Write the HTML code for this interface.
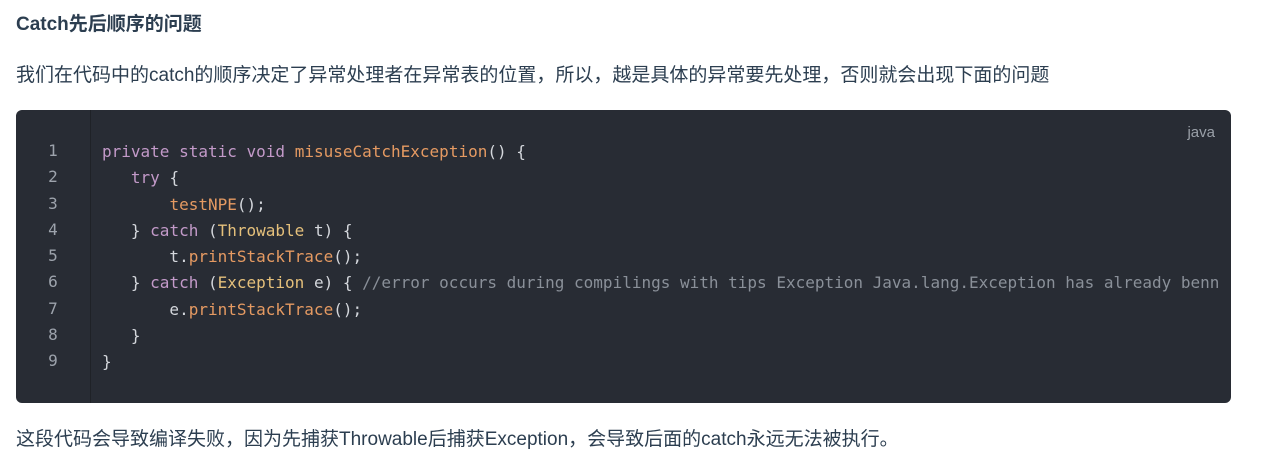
<!DOCTYPE html>
<html><head><meta charset="utf-8"><style>
body{margin:0;background:#fff;width:1264px;height:470px;overflow:hidden;font-family:"Liberation Sans","Noto Sans CJK SC",sans-serif;color:#2c3e50;}
h3{position:absolute;left:16px;top:12px;margin:0;font-size:19px;font-weight:bold;color:#2c3e50;line-height:26px;}
p{position:absolute;left:16px;margin:0;font-size:19px;line-height:26px;color:#2c3e50;}
.box{position:absolute;left:16px;top:110px;width:1215px;height:293px;background:#282c34;border-radius:6px;overflow:hidden;}
.gut{position:absolute;left:0;top:0;width:74px;height:100%;border-right:1px solid #1f2227;}
.ln{position:absolute;left:0;top:28px;width:74px;text-align:center;font-family:"DejaVu Sans Mono",monospace;font-size:16px;line-height:26.25px;color:#9da3ac;white-space:pre;}
pre{position:absolute;left:86px;top:29px;margin:0;font-family:"DejaVu Sans Mono",monospace;font-size:16px;line-height:26.25px;color:#d4d7dc;white-space:pre;}
.k{color:#c39ac9}.f{color:#e59a62}.c{color:#e5c07b}.m{color:#8a9099}
.lang{position:absolute;right:16px;top:14px;font-size:15px;color:#9aa0a8;}
</style></head><body>
<h3>Catch先后顺序的问题</h3>
<p style="top:63px">我们在代码中的catch的顺序决定了异常处理者在异常表的位置，所以，越是具体的异常要先处理，否则就会出现下面的问题</p>
<div class="box"><div class="gut"></div>
<div class="ln">1
2
3
4
5
6
7
8
9</div>
<div class="lang">java</div>
<pre><span class="k">private</span> <span class="k">static</span> <span class="k">void</span> <span class="f">misuseCatchException</span>() {
   <span class="k">try</span> {
       <span class="f">testNPE</span>();
   } <span class="k">catch</span> (<span class="c">Throwable</span> t) {
       t.<span class="f">printStackTrace</span>();
   } <span class="k">catch</span> (<span class="c">Exception</span> e) { <span class="m">//error occurs during compilings with tips Exception Java.lang.Exception has already benn</span>
       e.<span class="f">printStackTrace</span>();
   }
}</pre>
</div>
<p style="top:427px">这段代码会导致编译失败，因为先捕获Throwable后捕获Exception，会导致后面的catch永远无法被执行。</p>
</body></html>
